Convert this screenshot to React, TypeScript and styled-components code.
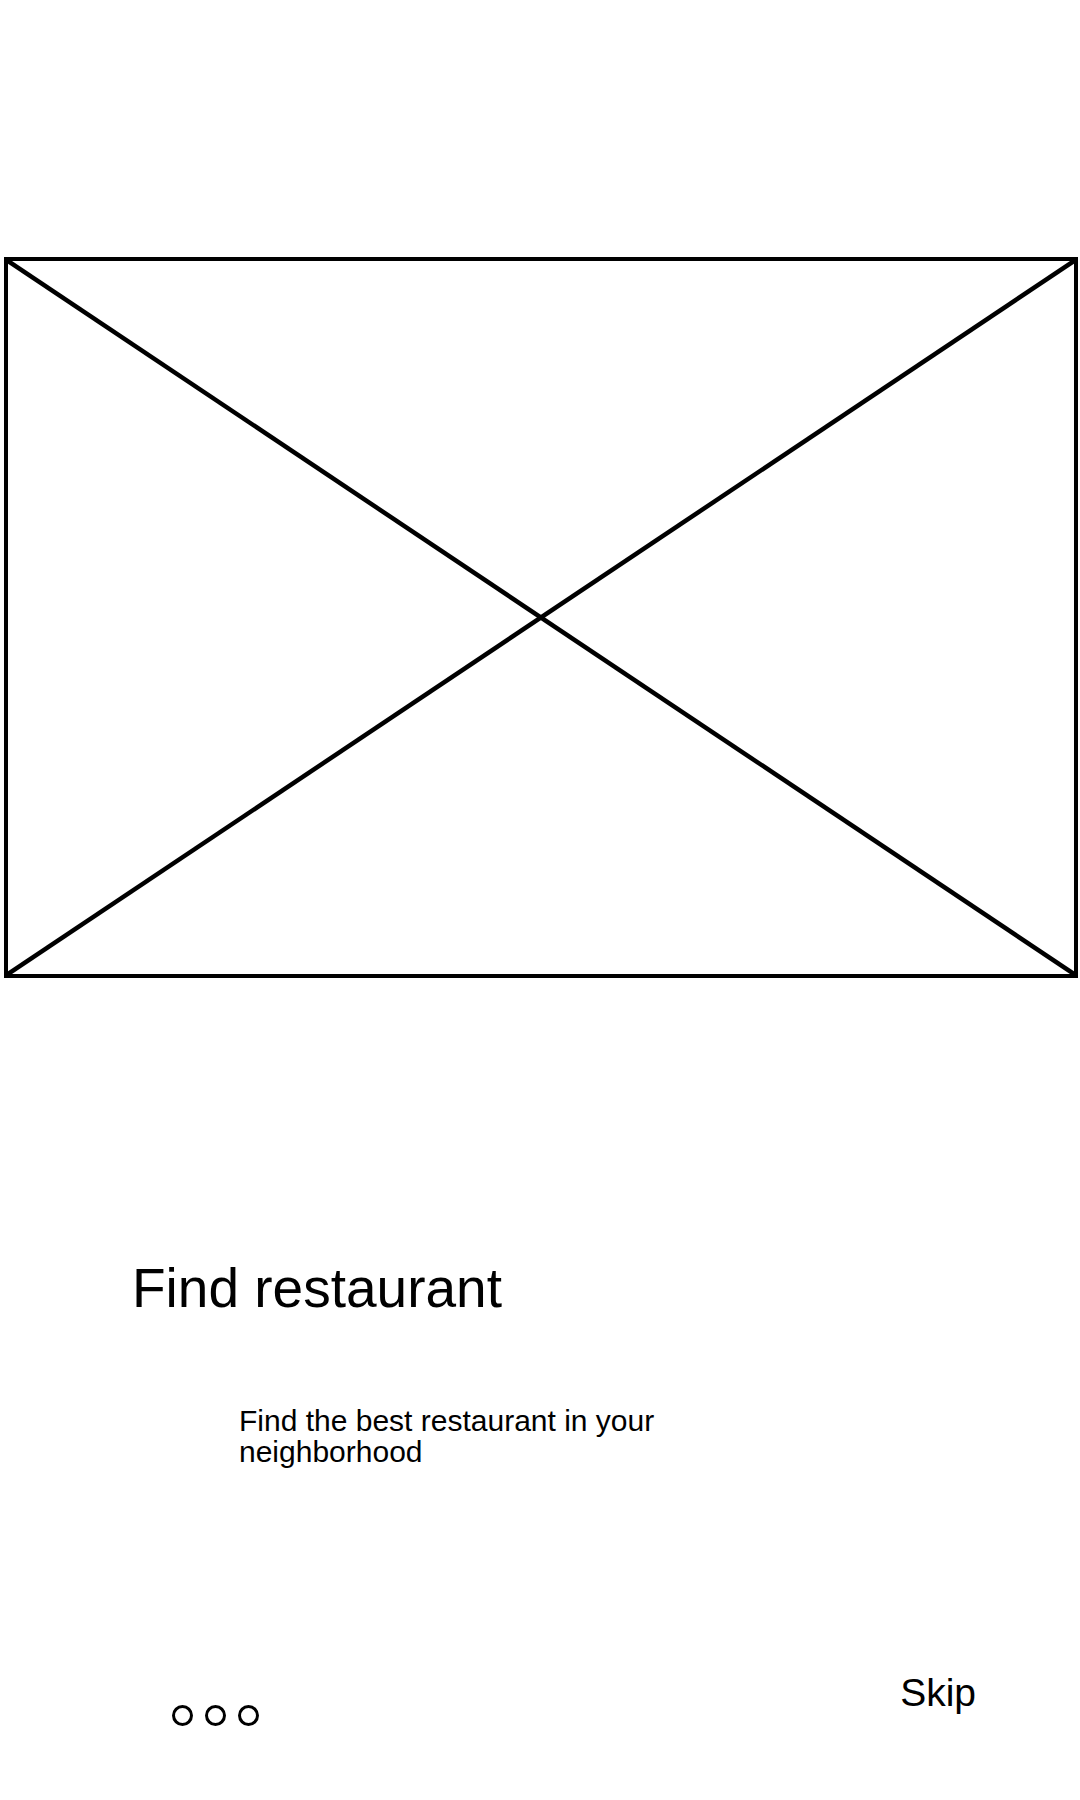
import React from "react";
import styled, { createGlobalStyle } from "styled-components";

const GlobalStyle = createGlobalStyle`
  html, body {
    margin: 0;
    padding: 0;
    background: #ffffff;
  }
  body {
    font-family: "Liberation Sans", Arial, sans-serif;
    color: #000000;
  }
`;

const Page = styled.div`
  display: flex;
  flex-direction: column;
  width: 1080px;
  min-height: 1800px;
  box-sizing: border-box;
  padding: 257px 2px 0 4px;
`;

const ImageFrame = styled.div`
  height: 721px;
  box-sizing: border-box;
  border: 4.5px solid #000;
`;

const Cross = styled.svg`
  display: block;
  width: 100%;
  height: 100%;
`;

const Title = styled.h1`
  margin: 279px 0 0;
  padding-left: 128px;
  font-size: 55px;
  font-weight: 400;
  line-height: 1.15;
`;

const Subtitle = styled.p`
  margin: 85px 0 0;
  padding-left: 235px;
  width: 460px;
  font-size: 30px;
  line-height: 31px;
`;

const Footer = styled.div`
  display: flex;
  justify-content: space-between;
  align-items: flex-start;
  margin-top: 204px;
  padding: 0 102px 0 168px;
`;

const Dots = styled.div`
  display: flex;
  gap: 12px;
  margin-top: 34px;
`;

const Dot = styled.span<{ $active?: boolean }>`
  width: 21px;
  height: 21px;
  box-sizing: border-box;
  border: 3px solid #000;
  border-radius: 50%;
  background: ${(p) => (p.$active ? "#000" : "transparent")};
`;

const SkipButton = styled.button`
  border: none;
  background: none;
  padding: 0;
  font-family: inherit;
  font-size: 39px;
  line-height: 1.15;
  color: #000;
  cursor: pointer;
`;

export default function App() {
  return (
    <>
      <GlobalStyle />
      <Page>
        <ImageFrame>
          <Cross viewBox="0 0 100 100" preserveAspectRatio="none">
            <line x1="0" y1="0" x2="100" y2="100" stroke="#000" strokeWidth="4.5" vectorEffect="non-scaling-stroke" />
            <line x1="100" y1="0" x2="0" y2="100" stroke="#000" strokeWidth="4.5" vectorEffect="non-scaling-stroke" />
          </Cross>
        </ImageFrame>
        <Title>Find restaurant</Title>
        <Subtitle>Find the best restaurant in your neighborhood</Subtitle>
        <Footer>
          <Dots>
            <Dot />
            <Dot />
            <Dot />
          </Dots>
          <SkipButton>Skip</SkipButton>
        </Footer>
      </Page>
    </>
  );
}
